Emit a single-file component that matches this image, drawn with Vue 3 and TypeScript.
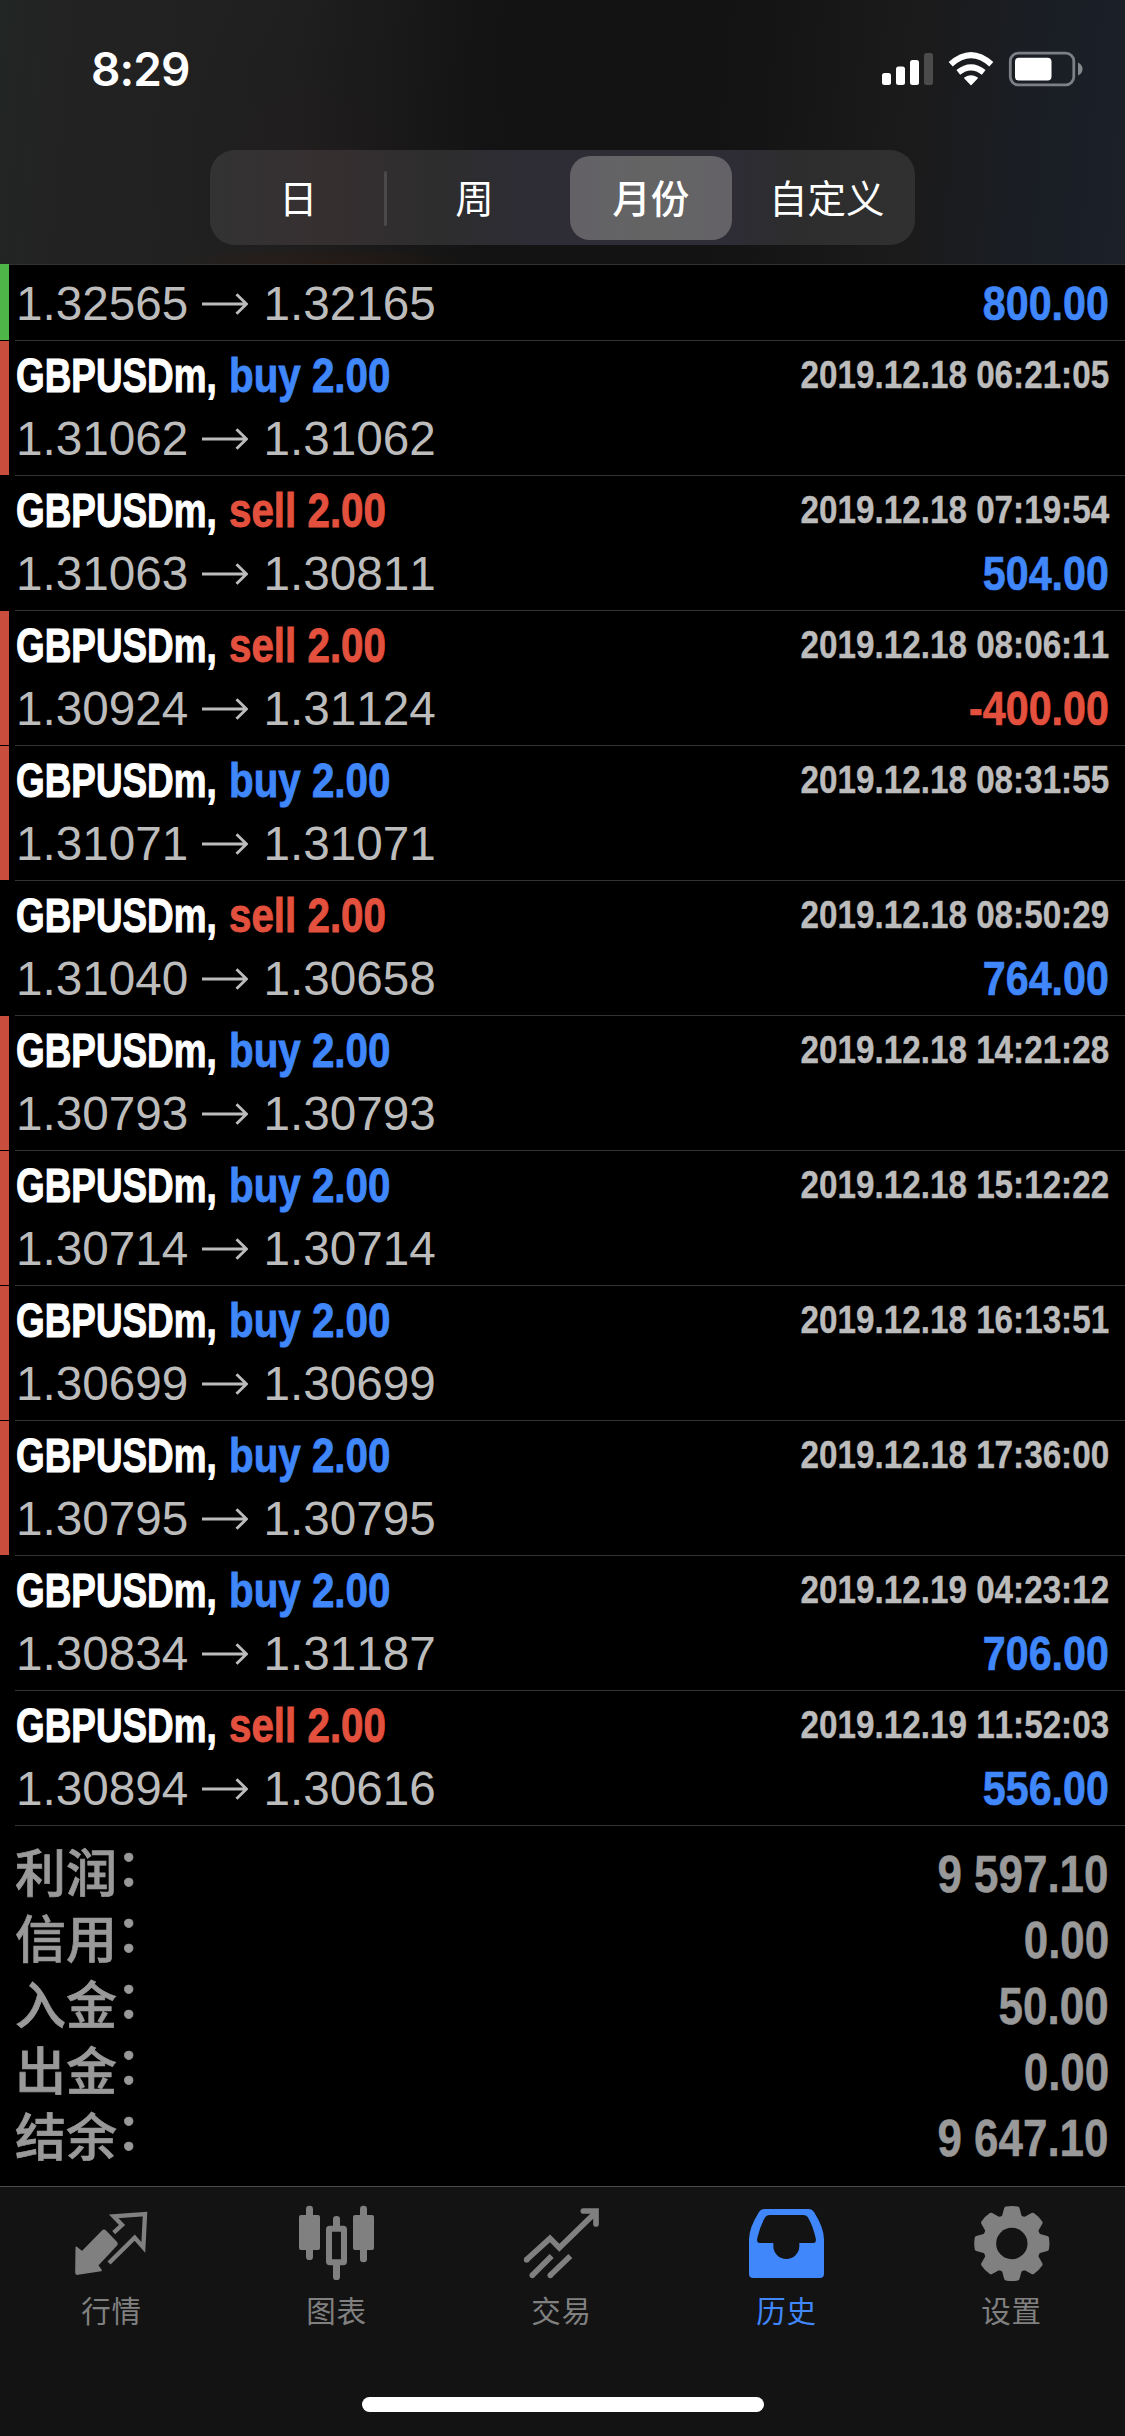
<script setup lang="ts">
interface Deal {
  side: 'buy' | 'sell'
  time: string
  open: string
  close: string
  profit?: string
  mark?: 'tp' | 'sl'
  clipped?: boolean
}

const periods = ['日', '周', '月份', '自定义']
const activePeriod = 2

const deals: Deal[] = [
  { side: 'sell', time: '', open: '1.32565', close: '1.32165', profit: '800.00', mark: 'tp', clipped: true },
  { side: 'buy', time: '2019.12.18 06:21:05', open: '1.31062', close: '1.31062', mark: 'sl' },
  { side: 'sell', time: '2019.12.18 07:19:54', open: '1.31063', close: '1.30811', profit: '504.00' },
  { side: 'sell', time: '2019.12.18 08:06:11', open: '1.30924', close: '1.31124', profit: '-400.00', mark: 'sl' },
  { side: 'buy', time: '2019.12.18 08:31:55', open: '1.31071', close: '1.31071', mark: 'sl' },
  { side: 'sell', time: '2019.12.18 08:50:29', open: '1.31040', close: '1.30658', profit: '764.00' },
  { side: 'buy', time: '2019.12.18 14:21:28', open: '1.30793', close: '1.30793', mark: 'sl' },
  { side: 'buy', time: '2019.12.18 15:12:22', open: '1.30714', close: '1.30714', mark: 'sl' },
  { side: 'buy', time: '2019.12.18 16:13:51', open: '1.30699', close: '1.30699', mark: 'sl' },
  { side: 'buy', time: '2019.12.18 17:36:00', open: '1.30795', close: '1.30795', mark: 'sl' },
  { side: 'buy', time: '2019.12.19 04:23:12', open: '1.30834', close: '1.31187', profit: '706.00' },
  { side: 'sell', time: '2019.12.19 11:52:03', open: '1.30894', close: '1.30616', profit: '556.00' },
]

const totals = [
  { label: '利润', value: '9 597.10' },
  { label: '信用', value: '0.00' },
  { label: '入金', value: '50.00' },
  { label: '出金', value: '0.00' },
  { label: '结余', value: '9 647.10' },
]

// Eight-toothed gear outline around (0, 0)
const gearPath = (() => {
  const parts: string[] = []
  const at = (deg: number, r: number) => {
    const a = (deg * Math.PI) / 180
    return `${(Math.sin(a) * r).toFixed(1)} ${(-Math.cos(a) * r).toFixed(1)}`
  }
  for (let i = 0; i < 8; i++) {
    const c = i * 45
    parts.push(`${i ? 'L' : 'M'}${at(c - 16, 84)}L${at(c - 9, 106)}Q${at(c, 108)} ${at(c + 9, 106)}L${at(c + 16, 84)}Q${at(c + 22.5, 79)} ${at(c + 29, 84)}`)
  }
  return parts.join('') + 'Z'
})()
</script>

<template>
  <div class="screen">
    <header class="header">
      <div class="status">
        <span class="clock">8:29</span>
        <svg class="status-icons" width="202" height="36" viewBox="0 0 202 36">
          <g fill="#fff">
            <rect x="0" y="22" width="9" height="12" rx="2.5" />
            <rect x="14" y="15.500" width="9" height="18.500" rx="2.500" />
            <rect x="28" y="9" width="9" height="25" rx="2.500" />
            <rect x="42" y="2" width="9" height="32" rx="2.500" fill="#4b4b4b" />
            <path d="M89 34.500L82.300 27.500Q81.800 26.700 82.600 26.200Q89 22.200 95.400 26.200Q96.200 26.700 95.700 27.500Z" />
          </g>
          <g fill="none" stroke="#fff" stroke-width="6">
            <path d="M76.300 21.300Q89 11.400 101.700 21.300" />
            <path d="M68.700 13.200Q89 -5 109.300 13.200" />
          </g>
          <rect x="128.300" y="2.200" width="63.500" height="31.600" rx="8" fill="none" stroke="#7c8086" stroke-width="2.800" />
          <rect x="133" y="6.800" width="36.500" height="22.600" rx="4" fill="#fff" />
          <path d="M196 11.500Q200.500 13.500 200.500 18Q200.500 22.500 196 24.500Z" fill="#85888d" />
        </svg>
      </div>
      <nav class="segments">
        <span
          v-for="(p, i) in periods"
          :key="p"
          class="segment"
          :class="{ active: i === activePeriod, divided: i === 0 }"
        >{{ p }}</span>
      </nav>
    </header>

    <main class="list">
      <article v-for="(d, i) in deals" :key="i" class="deal" :class="{ clipped: d.clipped }">
        <i class="mark" :class="d.mark"></i>
        <div class="body">
          <div v-if="!d.clipped" class="line top">
            <span class="symbol">GBPUSDm,</span>
            <span class="side" :class="d.side">{{ d.side }} 2.00</span>
            <time>{{ d.time }}</time>
          </div>
          <div class="line prices">
            <span>{{ d.open }}</span>
            <svg class="arrow" width="46" height="22" viewBox="0 0 46 22">
              <path d="M0 11H44.500M34.500 1.200L44.500 11L34.500 20.800" fill="none" stroke="#bcbcbc" stroke-width="2.900" />
            </svg>
            <span>{{ d.close }}</span>
            <span v-if="d.profit" class="profit" :class="{ loss: d.profit[0] === '-' }">{{ d.profit }}</span>
          </div>
        </div>
      </article>

      <section class="totals">
        <div v-for="t in totals" :key="t.label" class="total">
          <span class="label">{{ t.label }}<span class="colon">：</span></span>
          <span class="value">{{ t.value }}</span>
        </div>
      </section>
    </main>

    <footer class="tabbar">
      <div class="tabs">
        <div class="tab">
          <svg viewBox="216 99 243 243">
            <path d="M229 232L246 246L307 184Q312 179 317 184L348 216Q353 221 348 226L292 286L303 301L234 312Q228 313 228 307Z" fill="currentColor" stroke="currentColor" stroke-width="5" stroke-linejoin="round" />
            <path d="M341 188L366 165L341 139L435 132L430 232L404 203L327 279" fill="none" stroke="currentColor" stroke-width="13" />
          </svg>
          <span>行情</span>
        </div>
        <div class="tab">
          <svg viewBox="891 99 243 243">
            <g fill="currentColor">
              <rect x="918" y="107" width="21" height="163" rx="10" />
              <rect x="897" y="135" width="63" height="105" rx="6" />
              <rect x="1080" y="107" width="21" height="170" rx="10" />
              <rect x="1059" y="135" width="63" height="105" rx="6" />
              <rect x="999" y="138" width="21" height="40" rx="10" />
              <rect x="999" y="272" width="21" height="58" rx="10" />
            </g>
            <rect x="987" y="176.500" width="45" height="100" rx="2" fill="none" stroke="currentColor" stroke-width="18" />
          </svg>
          <span>图表</span>
        </div>
        <div class="tab">
          <svg viewBox="366 99 243 243">
            <g fill="none" stroke="currentColor" stroke-width="17">
              <path d="M380 269L450 205L478 233L586 128" />
              <path d="M550 123H588V162" stroke-linecap="round" />
              <path d="M397 316L455 258M451 316L511 258" />
            </g>
            <g fill="currentColor">
              <circle cx="380" cy="269" r="8.500" />
              <circle cx="397" cy="316" r="8.500" />
              <circle cx="451" cy="316" r="8.500" />
            </g>
          </svg>
          <span>交易</span>
        </div>
        <div class="tab active">
          <svg viewBox="66 99 243 243">
            <path
              fill="currentColor"
              fill-rule="evenodd"
              d="M119 117H250Q261 117 267 126Q297 174 297 208V311Q297 324 284 324H85Q72 324 72 311V208Q72 174 102 126Q108 117 119 117ZM134 135Q124 135 119 144Q105 169 97 204Q94 219 104 219H145V228A39 39 0 0 0 223 228V219H265Q275 219 272 204Q264 169 250 144Q245 135 235 135Z"
            />
          </svg>
          <span>历史</span>
        </div>
        <div class="tab">
          <svg viewBox="-119.500 -121.500 243 243">
            <path :d="gearPath" fill="currentColor" stroke="currentColor" stroke-width="13" stroke-linejoin="round" />
            <circle r="47" fill="#131313" />
          </svg>
          <span>设置</span>
        </div>
      </div>
      <div class="home"></div>
    </footer>
  </div>
</template>

<style>
body {
  background: #000;
}
</style>

<style scoped>
.screen {
  width: 1125px;
  height: 2436px;
  display: flex;
  flex-direction: column;
  overflow: hidden;
  background: #000;
  color: #fff;
  font-family: 'Liberation Sans', 'Noto Sans CJK SC', sans-serif;
  font-kerning: none;
}

.header {
  box-sizing: border-box;
  height: 265px;
  flex: none;
  border-bottom: 1px solid #303132;
  background:
    radial-gradient(ellipse 150px 18px at 320px 264px, rgba(54, 27, 12, 0.4), transparent),
    radial-gradient(ellipse 200px 160px at 320px 150px, rgba(40, 24, 24, 0.14), transparent),
    linear-gradient(95deg, #222625 0, #232323 60px, #1f1f1f 300px, #131313 500px, #131313 730px, #1b1b1c 930px, #1a1f27 1085px, #1b2029 100%);
}

.status {
  display: flex;
  height: 151px;
  align-items: flex-start;
  justify-content: space-between;
  padding: 0 41px 0 91px;
}

.clock {
  margin-top: 40px;
  font: 600 46px/58px Inter, sans-serif;
  letter-spacing: -0.9px;
}

.status-icons {
  margin-top: 51px;
}

.segments {
  box-sizing: border-box;
  display: flex;
  width: 705px;
  height: 95px;
  margin: -1px auto 0;
  padding: 6px 0 5px 0;
  border-radius: 25px;
  background: linear-gradient(90deg, #333334, #362f30 120px, #2d2d2e 230px, #2e2c35 330px, #2e2c35 520px, #2d2d2d 590px, #303030);
}

.segment {
  box-sizing: border-box;
  position: relative;
  flex: 1;
  border-radius: 20px;
  font: 400 38.500px/80px 'Noto Sans CJK SC', sans-serif;
  text-align: center;
}

.segment.active {
  flex: none;
  width: 162px;
  margin: 0 7px;
  font-weight: 500;
  background: linear-gradient(90deg, #636166, #646464 50%, #646267);
}

.segment.divided::after {
  content: '';
  position: absolute;
  right: -1px;
  top: 15px;
  width: 3px;
  height: 55px;
  border-radius: 2px;
  background: #4b494b;
}

.list {
  flex: 1;
}

.deal {
  display: flex;
  height: 135px;
}

.deal.clipped {
  height: 76px;
}

.mark {
  width: 9px;
  margin: 0 6px 1px 0;
}

.mark.tp {
  margin-top: -1px;
  background: #4eb648;
}

.mark.sl {
  background: #c94d3c;
}

.body {
  box-sizing: border-box;
  flex: 1;
  display: flex;
  flex-direction: column;
  padding: 4px 16px 0 0;
  border-bottom: 1px solid #343434;
}

.line {
  display: flex;
  align-items: center;
  font-size: 48px;
  white-space: pre;
}

.top {
  height: 62px;
  line-height: 62px;
  font-weight: 700;
}

.symbol {
  width: 213px;
  margin-left: 1px;
  transform: scaleX(0.768);
  transform-origin: left;
  -webkit-text-stroke: 1.1px #fff;
}

.side {
  transform: scaleX(0.84);
  transform-origin: left;
  -webkit-text-stroke: 0.9px currentColor;
}

.buy,
.profit {
  color: #3f87fb;
}

.sell,
.profit.loss {
  color: #e3513e;
}

time {
  margin-left: auto;
  padding-bottom: 2px;
  font-size: 39px;
  line-height: 60px;
  color: #bcbcbc;
  transform: scaleX(0.852);
  transform-origin: right;
  -webkit-text-stroke: 0.4px currentColor;
}

.prices {
  height: 64px;
  line-height: 64px;
  padding-left: 1px;
  font-size: 47.7px;
  color: #bcbcbc;
}

.clipped .prices {
  margin-top: 3px;
}

.arrow {
  margin: 0 15px 0 14px;
}

.profit {
  margin-left: auto;
  font-size: 48px;
  font-weight: 700;
  transform: scaleX(0.858);
  transform-origin: right;
  -webkit-text-stroke: 0.7px currentColor;
}

.totals {
  padding: 16px 16px 0 15px;
  color: #999;
}

.total {
  display: flex;
  justify-content: space-between;
  height: 66px;
  line-height: 66px;
}

.label {
  font-size: 51px;
  font-weight: 500;
  -webkit-text-stroke: 0.7px currentColor;
}

.colon {
  position: relative;
  top: -6px;
  left: -1px;
}

.value {
  font-size: 51px;
  font-weight: 700;
  transform: scaleX(0.862);
  transform-origin: right;
  -webkit-text-stroke: 0.5px currentColor;
}

.tabbar {
  box-sizing: border-box;
  height: 250px;
  flex: none;
  border-top: 1px solid #4b4b4b;
  background: #131313;
}

.tabs {
  display: flex;
  height: 210px;
}

.tab {
  flex: 1;
  display: flex;
  flex-direction: column;
  align-items: center;
  padding-top: 16px;
  color: #808080;
}

.tab.active {
  color: #3f87fb;
}

.tab svg {
  width: 81px;
  height: 81px;
}

.tab span {
  margin: 3px 2px 0 0;
  font: 400 29.500px/44px 'Noto Sans CJK SC', sans-serif;
  letter-spacing: 0.800px;
}

.home {
  width: 402px;
  height: 15px;
  margin: 0 auto;
  border-radius: 8px;
  background: #fff;
}
</style>
